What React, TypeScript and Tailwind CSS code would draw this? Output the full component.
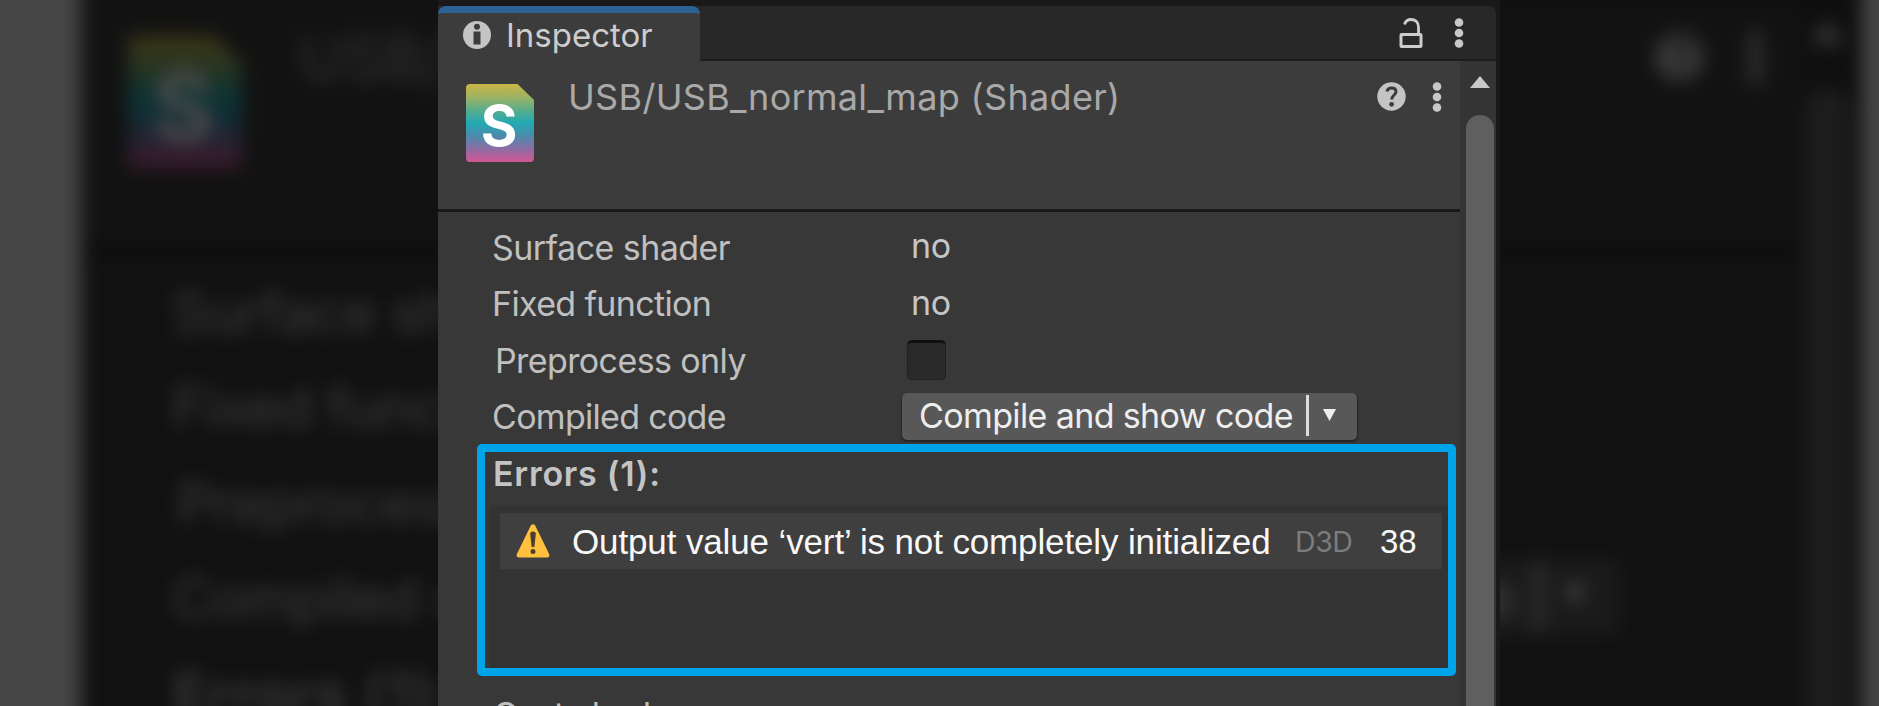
import type { ReactNode } from "react";

function InfoIcon() {
  return (
    <svg className="size-7 shrink-0" viewBox="0 0 28 28">
      <circle cx="14" cy="14" r="14" fill="#c4c4c4" />
      <circle cx="14" cy="5.8" r="3" fill="#3c3c3c" />
      <rect x="10.5" y="10.5" width="7" height="13" fill="#3c3c3c" />
    </svg>
  );
}

function LockIcon() {
  return (
    <svg className="h-[30px] w-6 shrink-0" viewBox="0 0 24 30" fill="none" stroke="#cccccc">
      <rect x="2" y="16.5" width="20" height="12" rx="0.5" strokeWidth="3" />
      <path d="M5.5 6.5C6.5 3.2 9 1.5 12 1.5C16.5 1.5 19.5 4.5 19.5 9V16" strokeWidth="2.8" />
    </svg>
  );
}

function DotsIcon() {
  return (
    <svg className="h-[30px] w-[10px] shrink-0" viewBox="0 0 10 30" fill="#c8c8c8">
      <circle cx="5" cy="4.5" r="4.3" />
      <circle cx="5" cy="15" r="4.3" />
      <circle cx="5" cy="25.5" r="4.3" />
    </svg>
  );
}

function HelpIcon() {
  return (
    <svg className="size-[29px] shrink-0" viewBox="0 0 29 29">
      <circle cx="14.5" cy="14.5" r="14.2" fill="#c4c4c4" />
      <path
        d="M10 9.6C10.4 7 12.2 5.9 14.6 5.9C17.2 5.9 19 7.3 19 9.7C19 13 14.7 13.2 14.7 17.6"
        fill="none"
        stroke="#3c3c3c"
        strokeWidth="3"
      />
      <circle cx="14.6" cy="22.3" r="2.4" fill="#3c3c3c" />
    </svg>
  );
}

function ShaderIcon() {
  return (
    <svg className="h-[78px] w-[68px] shrink-0" viewBox="0 0 68 78">
      <defs>
        <linearGradient id="shaderFill" x1="0" y1="0" x2="0" y2="1">
          <stop offset="0" stopColor="#c9b545" />
          <stop offset="0.15" stopColor="#a3b35f" />
          <stop offset="0.36" stopColor="#4fac90" />
          <stop offset="0.5" stopColor="#22a9b4" />
          <stop offset="0.66" stopColor="#4a8cab" />
          <stop offset="0.82" stopColor="#866fa5" />
          <stop offset="0.93" stopColor="#b95e9a" />
          <stop offset="1" stopColor="#cf5a92" />
        </linearGradient>
      </defs>
      <path
        d="M4 0H51.5L68 16V74A4 4 0 0 1 64 78H4A4 4 0 0 1 0 74V4A4 4 0 0 1 4 0Z"
        fill="url(#shaderFill)"
      />
      <text
        x="33"
        y="62"
        textAnchor="middle"
        fontFamily="Inter, sans-serif"
        fontWeight="700"
        fontSize="56"
        fill="#ffffff"
      >
        S
      </text>
    </svg>
  );
}

function WarningIcon() {
  return (
    <svg className="h-[34px] w-[34px] shrink-0" viewBox="0 0 34 34">
      <path
        d="M14.8 1.6Q17 -1 19.2 1.6L33.2 30.2Q34 33.6 31 33.6H3Q0 33.6 0.8 30.2Z"
        fill="#ffc03d"
      />
      <path d="M14.2 10Q14.2 7.5 17 7.5Q19.8 7.5 19.8 10L18.4 23H15.6Z" fill="#4a4030" />
      <circle cx="17" cy="27.4" r="2.5" fill="#4a4030" />
    </svg>
  );
}

function Row({ label, labelClass, children }: { label: string; labelClass: string; children: ReactNode }) {
  return (
    <div className="flex h-[56.5px] items-center">
      <div className={`w-[464px] shrink-0 text-[34px] text-[#c0c0c0] ${labelClass}`}>{label}</div>
      {children}
    </div>
  );
}

function No() {
  return <span className="-mt-[3px] pl-[9px] text-[34px] tracking-[-0.4px] text-[#c6c6c6]">no</span>;
}

function Inspector({ highlighted = false }: { highlighted?: boolean }) {
  return (
    <div className="flex h-[706px] w-[1062px] flex-col overflow-hidden bg-[#191919] pt-[6px] pr-1 font-['Inter',sans-serif] whitespace-nowrap">
      <div className="flex h-[55px] shrink-0 rounded-tr-lg border-b-2 border-[#1d1d1d] bg-[#282828]">
        <div className="-mb-[2px] flex w-[262px] items-center rounded-t-lg border-t-[7px] border-[#2c6193] bg-[#3c3c3c] pb-1 pl-[25px]">
          <InfoIcon />
          <span className="ml-[15px] text-[33px] leading-[44px] text-[#cdcdcd]">Inspector</span>
        </div>
        <div className="flex flex-1 items-center justify-end gap-[31px] pr-[32px]">
          <LockIcon />
          <DotsIcon />
        </div>
      </div>

      <div className="flex min-h-0 flex-1">
        <div className="flex w-[1022px] shrink-0 flex-col bg-[#383838]">
          <div className="flex h-[151px] shrink-0 border-b-[3px] border-[#191919] bg-[#3c3c3c] pl-7">
            <div className="pt-[23px]">
              <ShaderIcon />
            </div>
            <div className="ml-[34px] pt-[14px] text-[36px] leading-[44px] tracking-[0.32px] text-[#a9a9a9]">
              USB/USB_normal_map (Shader)
            </div>
            <div className="mr-[18px] ml-auto flex gap-[26px] pt-[21px]">
              <HelpIcon />
              <DotsIcon />
            </div>
          </div>

          <div className="shrink-0 pt-[7px]">
            <Row label="Surface shader" labelClass="pl-[54px] tracking-[-0.55px]"><No /></Row>
            <Row label="Fixed function" labelClass="pl-[54px] tracking-[-0.65px]"><No /></Row>
            <Row label="Preprocess only" labelClass="pl-[57px] tracking-[-0.6px]">
              <div className="ml-[5px] h-10 w-[39px] rounded-[5px] border border-t-[3px] border-[#1f1f1f] border-t-[#101010] bg-[#2a2a2a]" />
            </Row>
            <Row label="Compiled code" labelClass="pl-[54px] tracking-[-0.7px]">
              <div className="-mt-px flex h-[47px] w-[455px] items-center rounded-[5px] bg-[#585858] pl-[17px] shadow-[0_1px_1px_1px_#262626]">
                <span className="w-[387px] pb-[2px] text-[34px] tracking-[-0.62px] text-[#eeeeee]">
                  Compile and show code
                </span>
                <span className="mb-[2px] h-[41px] w-[3px] bg-[#dcdcdc]" />
                <svg className="mb-[2px] ml-[14px] h-3 w-[13px]" viewBox="0 0 13 12">
                  <path d="M0 0H13L6.5 12Z" fill="#eeeeee" />
                </svg>
              </div>
            </Row>
          </div>

          <div
            className={`-mt-px ml-[39px] flex h-[232px] w-[979px] shrink-0 flex-col rounded-[5px] border-8 ${
              highlighted ? "border-[#00a4e8]" : "border-transparent"
            }`}
          >
            <div className="h-[53px] pt-[1px] pl-[8px] text-[34px] leading-[42px] font-semibold tracking-[0.75px] text-[#c4c4c4]">
              Errors (1):
            </div>
            <div className="ml-[5px] flex-1 bg-[#333333] pt-2 pr-[6px] pl-[10px]">
              <div className="flex h-14 items-center bg-[#3f3f3f] pl-4">
                <WarningIcon />
                <span className="ml-[22px] w-[723px] pt-[2px] font-['Liberation_Sans',sans-serif] text-[35px] tracking-[-0.13px] text-[#f8f8f8]">
                  Output value ‘vert’ is not completely initialized
                </span>
                <span className="w-[85px] pt-[2px] text-[28.5px] tracking-[-0.4px] text-[#7c7c7c]">D3D</span>
                <span className="pt-[1px] font-['Liberation_Sans',sans-serif] text-[33px] text-[#f8f8f8]">38</span>
              </div>
            </div>
          </div>

          <div className="shrink-0 pt-[10px]">
            <Row label="Cast shadows" labelClass="pl-[55px] tracking-[-0.3px]"><No /></Row>
          </div>
        </div>

        <div className="flex flex-1 flex-col items-center bg-[#343434] pt-[15px] pl-[4px]">
          <svg className="h-3 w-5 shrink-0" viewBox="0 0 20 12">
            <path d="M10 0L20 12H0Z" fill="#c8c8c8" />
          </svg>
          <div className="mt-[27px] w-7 flex-1 rounded-t-full bg-[#5f5f5f]" />
        </div>
      </div>
    </div>
  );
}

export default function App() {
  return (
    <div className="relative flex h-[706px] w-[1879px] overflow-hidden bg-[#454545]">
      <div className="absolute -inset-10 overflow-hidden bg-[#e6e6e6] blur-[9px] brightness-[0.3]" aria-hidden="true">
        <div className="absolute top-[-66px] left-[121px] origin-top-left scale-x-[1.676] scale-y-[1.69]">
          <Inspector />
        </div>
      </div>
      <div className="relative ml-[438px]">
        <Inspector highlighted />
      </div>
    </div>
  );
}
